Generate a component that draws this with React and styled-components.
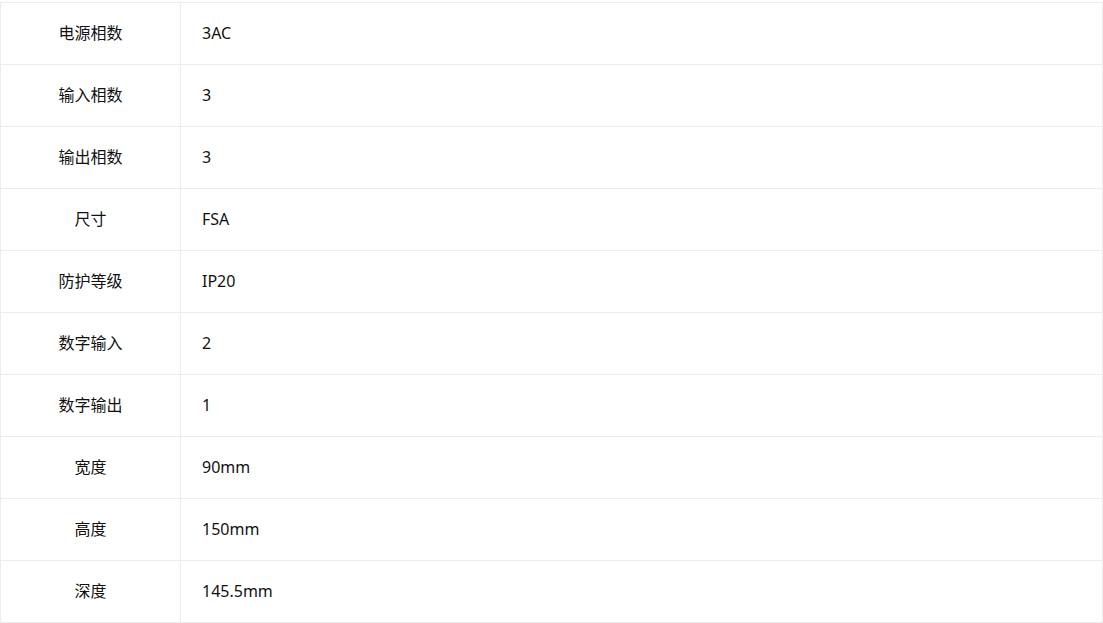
import React from "react";
import styled, { createGlobalStyle } from "styled-components";

const Global = createGlobalStyle`
  html, body { margin: 0; padding: 0; background: #fff; }
  body {
    padding-top: 2px;
    font-family: "Noto Sans", "Noto Sans CJK SC", sans-serif;
    color: #111;
  }
`;

const Table = styled.div`
  display: grid;
  grid-template-columns: 180px 1fr;
  width: 1103px;
  box-sizing: border-box;
  border-top: 1px solid #ececec;
  border-left: 1px solid #ececec;
`;

const Cell = styled.div`
  box-sizing: border-box;
  height: 62px;
  display: flex;
  align-items: center;
  justify-content: ${(p) => (p.$label ? "center" : "flex-start")};
  padding-left: ${(p) => (p.$label ? "0" : "21px")};
  padding-bottom: 1px;
  border-right: 1px solid #ececec;
  border-bottom: 1px solid #ececec;
  font-size: 16px;
  line-height: 1;
`;

const rows = [
  ["电源相数", "3AC"],
  ["输入相数", "3"],
  ["输出相数", "3"],
  ["尺寸", "FSA"],
  ["防护等级", "IP20"],
  ["数字输入", "2"],
  ["数字输出", "1"],
  ["宽度", "90mm"],
  ["高度", "150mm"],
  ["深度", "145.5mm"],
];

export default function App() {
  return (
    <>
      <Global />
      <Table>
        {rows.map(([k, v]) => (
          <React.Fragment key={k}>
            <Cell $label>{k}</Cell>
            <Cell>{v}</Cell>
          </React.Fragment>
        ))}
      </Table>
    </>
  );
}
